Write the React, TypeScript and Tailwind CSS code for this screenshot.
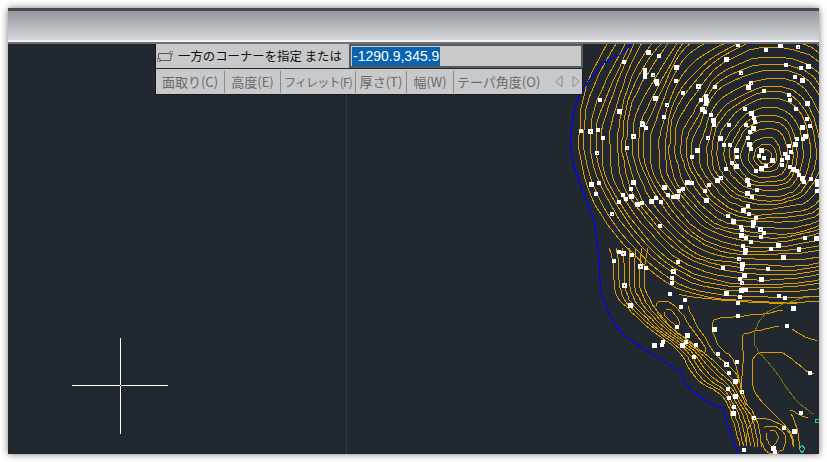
const UPPER_DOTS = [[264,67,2],[297,77],[193,96],[349,111],[255,130,1],[279,134,3],[287,153],[291,161],[348,153],[413,168,3],[465,171],[369,188],[285,203],[121,210],[322,225,3],[178,242],[311,261],[247,280],[245,283,3],[257,293],[63,302],[90,303,3],[115,299],[130,323],[219,318,3],[201,354,3],[111,368,3],[92,461],[117,459],[109,492],[219,456],[212,477],[190,494],[212,497],[199,506],[176,516],[231,521],[245,519],[157,552,3],[273,512],[288,503],[303,515],[311,471],[324,494],[339,502],[350,497],[357,483],[369,476],[381,456],[396,459],[396,381],[411,360],[447,465],[435,482],[437,509],[300,588],[437,198],[437,210],[424,210],[437,222],[427,237],[435,246],[453,255],[459,269],[462,285],[444,324,3],[480,323],[492,345],[510,345],[528,360],[531,382],[516,398],[528,407],[498,417],[483,443,3],[471,450],[507,285],[555,237],[573,249],[582,264],[585,276],[579,294],[570,306],[564,324],[567,342],[573,357],[557,285],[603,360],[597,378],[612,384],[636,390],[666,390],[675,372],[680,381],[694,366],[687,348],[705,342],[711,327],[729,327],[735,318],[666,405],[690,411],[699,417],[711,423],[717,435],[726,444],[732,456],[753,447],[771,453],[771,465],[771,483],[603,414],[618,408],[588,423],[561,450],[567,465],[591,479],[561,490],[576,501],[565,528],[549,540],[567,552],[588,564],[579,576],[579,588],[504,558],[518,573],[543,590],[546,600],[600,597,3],[612,609],[603,621],[543,615],[558,624],[573,635],[654,645],[633,657],[735,623],[768,623],[717,657],[535,45],[660,46],[618,60],[713,51,3],[498,86],[678,105],[723,114],[744,108],[543,129,3],[573,159,3],[564,171],[612,183],[705,141],[725,150],[687,195],[690,209],[741,220],[708,238],[741,267],[726,291],[750,288]];

const LOWER_DOTS = [[177,36],[190,39,3],[216,45],[163,63],[240,78,3],[258,84],[354,66],[338,92,3],[337,113],[335,129],[192,135,3],[330,162],[375,180],[209,195],[364,201],[350,261],[381,286],[378,306],[407,316],[367,315],[310,306],[307,315],[283,315],[403,351],[474,342],[497,372,3],[530,366],[507,399],[524,423],[505,447],[545,456,3],[524,468],[506,474],[523,501],[520,519],[583,534,3],[553,630],[639,624],[645,637],[672,564],[702,572],[723,519],[534,228],[462,267],[680,258],[750,399],[700,204],[534,189],[540,170],[543,150],[558,150],[606,153],[498,159],[657,168],[675,174],[603,118],[624,87],[489,84],[546,72],[537,57,3],[546,87],[552,105],[540,117],[546,129,3],[669,50],[717,30],[633,27],[654,15],[573,5],[549,18],[555,30],[555,40]];

const UPPER = UPPER_DOTS.map(([x, y, kind]) => [x / 3 + 560, y / 3 + 30, kind ?? 0]);
const LOWER = LOWER_DOTS.map(([x, y, kind]) => [x / 3 + 560, y / 3 + 240, kind ?? 0]);

// traced in the zoomed crop of the lower half
const z = (pts: number[][]) => pts.map(([x, y]) => [x / 3 + 560, y / 3 + 240]);

const BLUE = [[632,44],[620,55],[603,63],[588,82],[577,100],[573,117],[570,143],[573,163],[582,190],[593,217],[598,247],[601,295],[615,325],[625,336],[653,355],[673,367],[683,373],[684,382],[693,392],[710,403],[723,408],[727,423],[738,454]];

const BASE = [[578,125],[580,165],[592,200],[620,240],[660,280],[700,297],[760,303],[830,300],[900,280],[950,150],[900,-40],[780,-80],[660,-30],[620,20],[590,80]];

const RIDGE_OUT = z([[140,0],[160,60],[160,130],[175,180],[210,210],[260,260],[330,310],[370,345],[385,385],[420,430],[480,458],[505,495],[515,530],[530,580],[545,640]]);
const RIDGE_IN = z([[270,0],[255,60],[250,140],[280,200],[310,235],[340,270],[410,320],[440,345],[470,370],[500,400],[530,430],[550,480],[590,530],[600,590],[610,640]]);

const LOOSE = [
  [[285,205],[290,185],[320,180],[360,210],[390,260],[430,310],[440,340],[420,335],[380,300],[340,270],[300,230],[285,205]],
  [[310,210],[330,205],[355,235],[360,260],[335,250],[312,225],[310,210]],
  [[345,155],[380,170],[500,180],[600,188],[777,190]],
  [[375,175],[400,240],[440,300],[460,340],[500,370],[530,400],[540,440]],
  [[700,205],[620,220],[540,228],[480,232],[452,245],[465,300],[480,325],[510,345],[530,380],[540,440],[548,460],[570,500]],
  [[680,255],[620,265],[580,275],[542,282],[550,340],[545,420],[540,455],[570,520]],
  [[680,255],[720,285],[760,298],[777,300]],
  [[777,408],[740,395],[700,360],[665,335],[610,335],[580,345],[572,420],[590,470],[630,510],[680,560],[700,590],[700,640]],
  [[620,570],[650,570],[655,600],[635,625],[615,590],[620,570]],
  [[600,570],[630,552],[670,570],[680,610],[660,640],[620,640],[600,600],[600,570]],
  [[555,640],[560,570],[590,530],[640,540],[690,570],[705,640]],
  [[685,512],[700,510],[720,530],[760,530]],
  [[685,512],[705,540],[718,600],[715,640]],
].map(z);

const OLIVE = z([[777,165],[700,180],[620,215],[590,255],[578,295],[590,330],[620,360],[650,400],[690,460],[740,510],[775,530]]);

function smooth(pts: number[][], closed: boolean) {
  let out = pts;
  for (let pass = 0; pass < 2; pass++) {
    const next: number[][] = [];
    const n = closed ? out.length : out.length - 1;
    for (let i = 0; i < n; i++) {
      const a = out[i];
      const b = out[(i + 1) % out.length];
      next.push([a[0] * 0.75 + b[0] * 0.25, a[1] * 0.75 + b[1] * 0.25]);
      next.push([a[0] * 0.25 + b[0] * 0.75, a[1] * 0.25 + b[1] * 0.75]);
    }
    out = next;
  }
  return out;
}

const line = (pts: number[][]) => pts.map(([x, y]) => `${Math.round(x)},${Math.round(y)}`).join(" ");

// rings round the summit near (765,158)
function rings() {
  const shape = smooth(BASE, true);
  const result: string[] = [];
  for (let k = 1; k <= 31; k++) {
    const t = k / 31 + Math.sin(k * 1.7) * 0.005;
    const pts = shape.map(([x, y], i) => {
      const wob = Math.sin(i * 0.55 + k * 0.8) * 1.6 * Math.min(1, t * 2);
      return [765 + (x - 765) * t + wob, 158 + (y - 158) * t + wob * 0.7];
    });
    result.push(line([...pts, pts[0]]));
  }
  return result;
}

function ridge() {
  const result: string[] = [];
  for (let k = 0; k < 7; k++) {
    const t = k / 6;
    const pts = RIDGE_OUT.map(([x, y], i) => {
      const b = RIDGE_IN[i];
      return [x + (b[0] - x) * t, y + (b[1] - y) * t];
    });
    result.push(line(smooth(pts, false)));
  }
  return result;
}

function TopoMap() {
  const dots = [...UPPER, ...LOWER];
  return (
    <svg className="absolute inset-0 h-full w-full" viewBox="8 44 811 410" shapeRendering="crispEdges">
      {rings().map((p, i) => (
        <polyline key={i} points={p} fill="none" stroke="#dc9c00" strokeWidth="1" />
      ))}
      {ridge().map((p, i) => (
        <polyline key={i} points={p} fill="none" stroke="#dc9c00" strokeWidth="1" />
      ))}
      {LOOSE.map((p, i) => (
        <polyline key={i} points={line(smooth(p, false))} fill="none" stroke="#dc9c00" strokeWidth="1" />
      ))}
      <polyline points={line(smooth(OLIVE, false))} fill="none" stroke="#77770c" strokeWidth="1" />
      <polyline points={line(BLUE)} fill="none" stroke="#0505e6" strokeWidth="1.3" />
      {dots.map(([x, y, kind], i) => {
        const size = i % 3 === 0 ? 5 : 4;
        return kind === 1 ? (
          <rect key={i} x={Math.round(x - 2)} y={Math.round(y - 5)} width="4" height="11" fill="#fff" />
        ) : (
          <g key={i}>
            <rect x={Math.round(x - 2)} y={Math.round(y - 2)} width={size} height={size} fill="#fff" />
            {kind === 3 && <rect x={Math.round(x)} y={Math.round(y)} width="1" height="1" fill="#212830" />}
          </g>
        );
      })}
      <path d="M802 445l3 4-3 4-3-4z" fill="none" stroke="#1fd68a" strokeWidth="1" />
      <path d="M819 419h-4v3h4" fill="none" stroke="#1fd68a" strokeWidth="1" />
      <path d="M346.5 44v410" stroke="#1d4a2a" strokeWidth="1" />
      <path d="M120.5 338v96M72 385.5h96" stroke="#fff" strokeWidth="1" />
      <rect x="120" y="385" width="1" height="1" fill="#212830" />
    </svg>
  );
}

const OPTIONS = [
  { label: "面取り(C)", w: "w-[69px]", extra: "" },
  { label: "高度(E)", w: "w-[56px]", extra: "" },
  { label: "フィレット(F)", w: "w-[75px]", extra: "text-[12px] tracking-[-0.8px]" },
  { label: "厚さ(T)", w: "w-[51px]", extra: "" },
  { label: "幅(W)", w: "w-[47px]", extra: "" },
];

function CommandPanel() {
  return (
    <div className="absolute left-[147px] top-0 w-[428px] font-['Noto_Sans_CJK_JP','Noto_Sans',sans-serif]">
      <div className="flex h-[24px] items-center border-l border-[#16181b] bg-[#c8c9cb] pl-[1px]">
        <svg width="16" height="11" viewBox="0 0 16 11" fill="none" className="shrink-0">
          <path d="M1.5 9.5V2.5H14.5" stroke="#5b5b5b" strokeWidth="1" />
          <path d="M1.5 9.5H13.5L14.5 1.5" stroke="#5b5b5b" strokeWidth="1" />
          <rect x="13" y="0" width="3" height="3" fill="#c8c9cb" stroke="#5b5b5b" strokeWidth="0.8" />
          <rect x="0" y="8" width="3" height="3" fill="#c8c9cb" stroke="#5b5b5b" strokeWidth="0.8" />
        </svg>
        <span className="ml-[5px] whitespace-nowrap text-[12.4px] leading-none text-[#111]">一方のコーナーを指定 または</span>
      </div>
      <div className="absolute left-[194px] top-0 flex h-[24px] w-[234px] items-center border-2 border-[#55585c] bg-[#c8c9cb] pl-[1px]">
        <span className="bg-[#0a63ae] px-[1px] font-['Liberation_Sans',sans-serif] text-[14px] leading-[19px] text-white">-1290.9,345.9</span>
      </div>
      <div className="mt-[1px] flex h-[26px] items-center border-b border-l border-r border-[#16181b] bg-[#c8c9cb] text-[13px] text-[#6a6a6a]">
        {OPTIONS.map((o) => (
          <div key={o.label} className={`flex h-[22px] ${o.w} ${o.extra} items-center justify-center whitespace-nowrap border-r border-[#8b8c8e]`}>
            {o.label}
          </div>
        ))}
        <div className="ml-[3px] whitespace-nowrap">テーパ角度(O)</div>
        <div className="ml-auto mr-[2px] flex items-center gap-[9px]">
          <svg width="8" height="13" viewBox="0 0 8 13" fill="none">
            <path d="M7 1L1 6.5 7 12z" stroke="#8c8d8f" strokeWidth="1" />
          </svg>
          <svg width="8" height="13" viewBox="0 0 8 13" fill="none">
            <path d="M1 1l6 5.5L1 12z" stroke="#8c8d8f" strokeWidth="1" />
          </svg>
        </div>
      </div>
    </div>
  );
}

export default function App() {
  return (
    <div className="h-[462px] w-[827px] overflow-hidden bg-white pl-2 pt-2">
      <div className="flex h-[446px] w-[811px] flex-col shadow-[0_0_7px_rgba(0,0,0,0.55)]">
        <div className="h-[36px] shrink-0 border-b-2 border-t-[3px] border-b-[#6f7175] border-t-[#4b4b4c] bg-[linear-gradient(#95999f,#d3d5d9_92%,#f2f3f4_93%)]" />
        <div className="relative flex-1 overflow-hidden bg-[#212830]">
          <TopoMap />
          <CommandPanel />
        </div>
      </div>
    </div>
  );
}
